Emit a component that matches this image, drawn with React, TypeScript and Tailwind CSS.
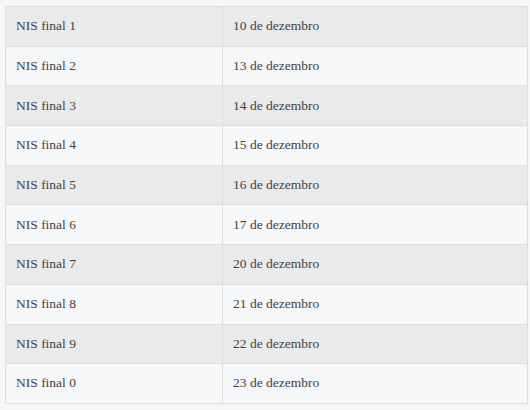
const rows = [
  ['NIS final 1', '10 de dezembro'],
  ['NIS final 2', '13 de dezembro'],
  ['NIS final 3', '14 de dezembro'],
  ['NIS final 4', '15 de dezembro'],
  ['NIS final 5', '16 de dezembro'],
  ['NIS final 6', '17 de dezembro'],
  ['NIS final 7', '20 de dezembro'],
  ['NIS final 8', '21 de dezembro'],
  ['NIS final 9', '22 de dezembro'],
  ['NIS final 0', '23 de dezembro'],
];

export default function App() {
  return (
    <div className="w-[530px] h-[410px] bg-[#f6f7f8] pl-[5px] pt-[6px] [font-family:'Liberation_Serif',serif] text-[13.5px] text-[#3f4247]">
      <table className="w-[523px] border-collapse border border-[#dcdfe2]">
        <tbody>
          {rows.map(([nis, date], i) => (
            <tr
              key={nis}
              className={`h-[39.7px] border-b border-[#dcdfe2] ${i % 2 === 0 ? 'bg-[#e9eaeb]' : 'bg-[#f6f7f8]'}`}
            >
              <td className="w-[217px] pl-[10px] border-r border-[#dcdfe2]">{nis}</td>
              <td className="pl-[10px]">{date}</td>
            </tr>
          ))}
        </tbody>
      </table>
    </div>
  );
}
